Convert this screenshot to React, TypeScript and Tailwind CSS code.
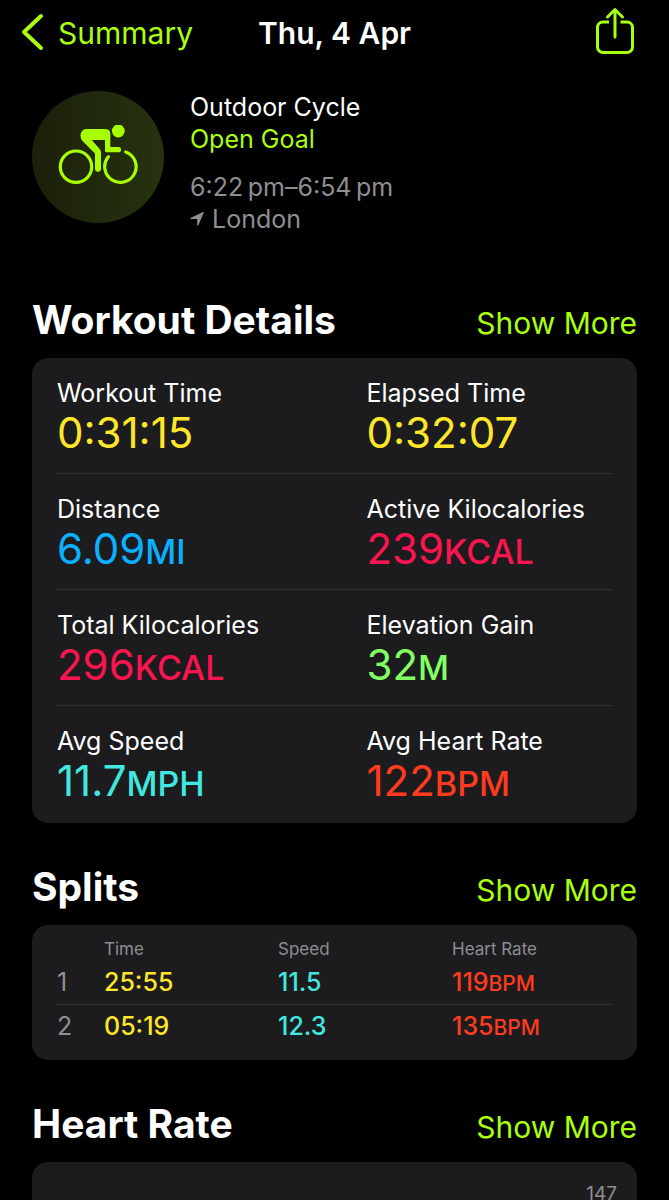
import { clsx } from 'clsx';

interface Metric {
  label: string;
  value: string;
  unit?: string;
  color: string;
}

interface Split {
  index: number;
  time: string;
  speed: string;
  heartRate: number;
}

const metrics: Metric[] = [
  { label: 'Workout Time', value: '0:31:15', color: 'text-[#ffe629]' },
  { label: 'Elapsed Time', value: '0:32:07', color: 'text-[#ffe629]' },
  { label: 'Distance', value: '6.09', unit: 'MI', color: 'text-[#0bb0ff]' },
  { label: 'Active Kilocalories', value: '239', unit: 'KCAL', color: 'text-[#fa1450]' },
  { label: 'Total Kilocalories', value: '296', unit: 'KCAL', color: 'text-[#fa1450]' },
  { label: 'Elevation Gain', value: '32', unit: 'M', color: 'text-[#83ff66]' },
  { label: 'Avg Speed', value: '11.7', unit: 'MPH', color: 'text-[#41e8df]' },
  { label: 'Avg Heart Rate', value: '122', unit: 'BPM', color: 'text-[#ff3b1f]' },
];

const splits: Split[] = [
  { index: 1, time: '25:55', speed: '11.5', heartRate: 119 },
  { index: 2, time: '05:19', speed: '12.3', heartRate: 135 },
];

function ShareIcon() {
  return (
    <svg className="h-12 w-10" viewBox="0 0 40 48" fill="none" stroke="currentColor" strokeWidth="3" strokeLinecap="round" strokeLinejoin="round">
      <path strokeLinecap="butt" d="M14 16H8a5.500 5.500 0 0 0-5.500 5.500V41A5.500 5.500 0 0 0 8 46.500h24a5.500 5.500 0 0 0 5.500-5.500V21.500A5.500 5.500 0 0 0 32 16h-6.500" />
      <path d="M20 31V4M12.500 11 20 3.500l7.500 7.500" />
    </svg>
  );
}

function CyclistIcon() {
  return (
    <svg className="h-16 w-20" viewBox="0 0 80 64" fill="none" stroke="currentColor">
      <circle cx="18" cy="41.7" r="15.700" strokeWidth="3.200" />
      <path d="M50.300 31.700A15.700 15.700 0 1 0 67.700 26.900" strokeWidth="3.200" strokeLinecap="round" />
      <circle cx="60.300" cy="6" r="6.400" fill="currentColor" stroke="none" />
      <path
        d="M28.500 4H47c3.500 0 5.300 1.800 5.300 5v13h8.100a2.650 2.650 0 0 1 0 5.300H49c-1.500 0-2-.6-2-2V15H33.700l7.500 8.500c1.200 1.400 1.800 2.500 1.800 4.500v15.700a3 3 0 0 1-6 0V28.500L25 16.500C20.500 12 22.500 4 28.500 4z"
        fill="currentColor"
        stroke="none"
      />
    </svg>
  );
}

function SectionHeading({ title }: { title: string }) {
  return (
    <div className="mb-3.5 flex items-baseline justify-between">
      <h2 className="text-[39px] leading-12 font-bold">{title}</h2>
      <a href="#" className="text-[30px] leading-10 text-[#a8ff10]">
        Show More
      </a>
    </div>
  );
}

export default function App() {
  return (
    <div className="h-screen overflow-hidden bg-black font-['Inter',sans-serif] text-white">
      <header className="grid grid-cols-[1fr_auto_1fr] items-center px-5 pt-1.5 pb-1">
        <a href="#" className="flex items-center gap-3.5 text-[30px] leading-12 text-[#a8ff10]">
          <svg className="h-10 w-6" viewBox="0 0 24 40" fill="none" stroke="currentColor" strokeWidth="4" strokeLinecap="round" strokeLinejoin="round">
            <path d="M21 3 4 19l17 16" />
          </svg>
          Summary
        </a>
        <h1 className="text-[30px] leading-12 font-semibold">Thu, 4 Apr</h1>
        <button type="button" aria-label="Share" className="mr-3.5 justify-self-end pb-1.5 text-[#a8ff10]">
          <ShareIcon />
        </button>
      </header>

      <main className="px-8">
        <section className="mt-[27px] flex items-start gap-[26px]">
          <div className="flex size-[132px] shrink-0 items-center justify-center rounded-full bg-linear-to-r from-[#1b200a] to-[#26330f] text-[#a8ff00]">
            <CyclistIcon />
          </div>
          <div className="text-[25px] leading-8">
            <p>Outdoor Cycle</p>
            <p className="text-[#a8ff10]">Open Goal</p>
            <p className="mt-4 text-[#8e8e93]">6:22{'\u2009'}pm–6:54{'\u2009'}pm</p>
            <p className="flex items-center gap-2 text-[#8e8e93]">
              <svg className="size-3.5" viewBox="0 0 14 14" fill="currentColor">
                <path d="M13.800.6 8.400 13.300c-.2.600-1.200.500-1.200-.2V7.500c0-.3-.1-.4-.4-.4L1 7c-.7 0-.8-1-.1-1.300L13 .1c.5-.3 1 .1.800.5z" />
              </svg>
              London
            </p>
          </div>
        </section>

        <section className="mt-[61px]">
          <SectionHeading title="Workout Details" />
          <dl className="grid grid-cols-2 rounded-2xl bg-[#1c1c1e] px-[25px] pb-px">
            {metrics.map((metric, i) => (
              <div
                key={metric.label}
                className={clsx(
                  'h-[116px] pt-[19px]',
                  i % 2 === 1 && 'pl-8',
                  i < metrics.length - 2 && 'border-b border-[#303033]'
                )}
              >
                <dt className="text-[25px] leading-8 whitespace-nowrap">{metric.label}</dt>
                <dd className={clsx('text-[42px] leading-12', metric.color)}>
                  {metric.value}
                  {metric.unit && <span className="text-[34px] font-medium">{metric.unit}</span>}
                </dd>
              </div>
            ))}
          </dl>
        </section>

        <section className="mt-10">
          <SectionHeading title="Splits" />
          <div className="rounded-2xl bg-[#1c1c1e] px-[25px] py-3">
            <table className="w-full table-fixed text-left">
              <thead>
                <tr className="text-[17px] leading-6 text-[#8e8e93]">
                  <th className="w-[47px]" aria-label="Split" />
                  <th className="w-[174px] font-normal">Time</th>
                  <th className="w-[174px] font-normal">Speed</th>
                  <th className="font-normal">Heart Rate</th>
                </tr>
              </thead>
              <tbody>
                {splits.map((split) => (
                  <tr key={split.index} className="border-b border-[#303033] text-[25px] leading-[43px] font-medium last:border-0">
                    <td className="font-normal text-[#8e8e93]">{split.index}</td>
                    <td className="text-[#ffe629]">{split.time}</td>
                    <td className="text-[#41e8df]">{split.speed}</td>
                    <td className="text-[#ff3b1f]">
                      {split.heartRate}
                      <span className="text-[21px] leading-none">BPM</span>
                    </td>
                  </tr>
                ))}
              </tbody>
            </table>
          </div>
        </section>

        <section className="mt-10">
          <SectionHeading title="Heart Rate" />
          <div className="h-64 rounded-2xl bg-[#1c1c1e] px-5 pt-5 text-right text-[19px] leading-6 text-[#8e8e93]">
            147
          </div>
        </section>
      </main>
    </div>
  );
}
